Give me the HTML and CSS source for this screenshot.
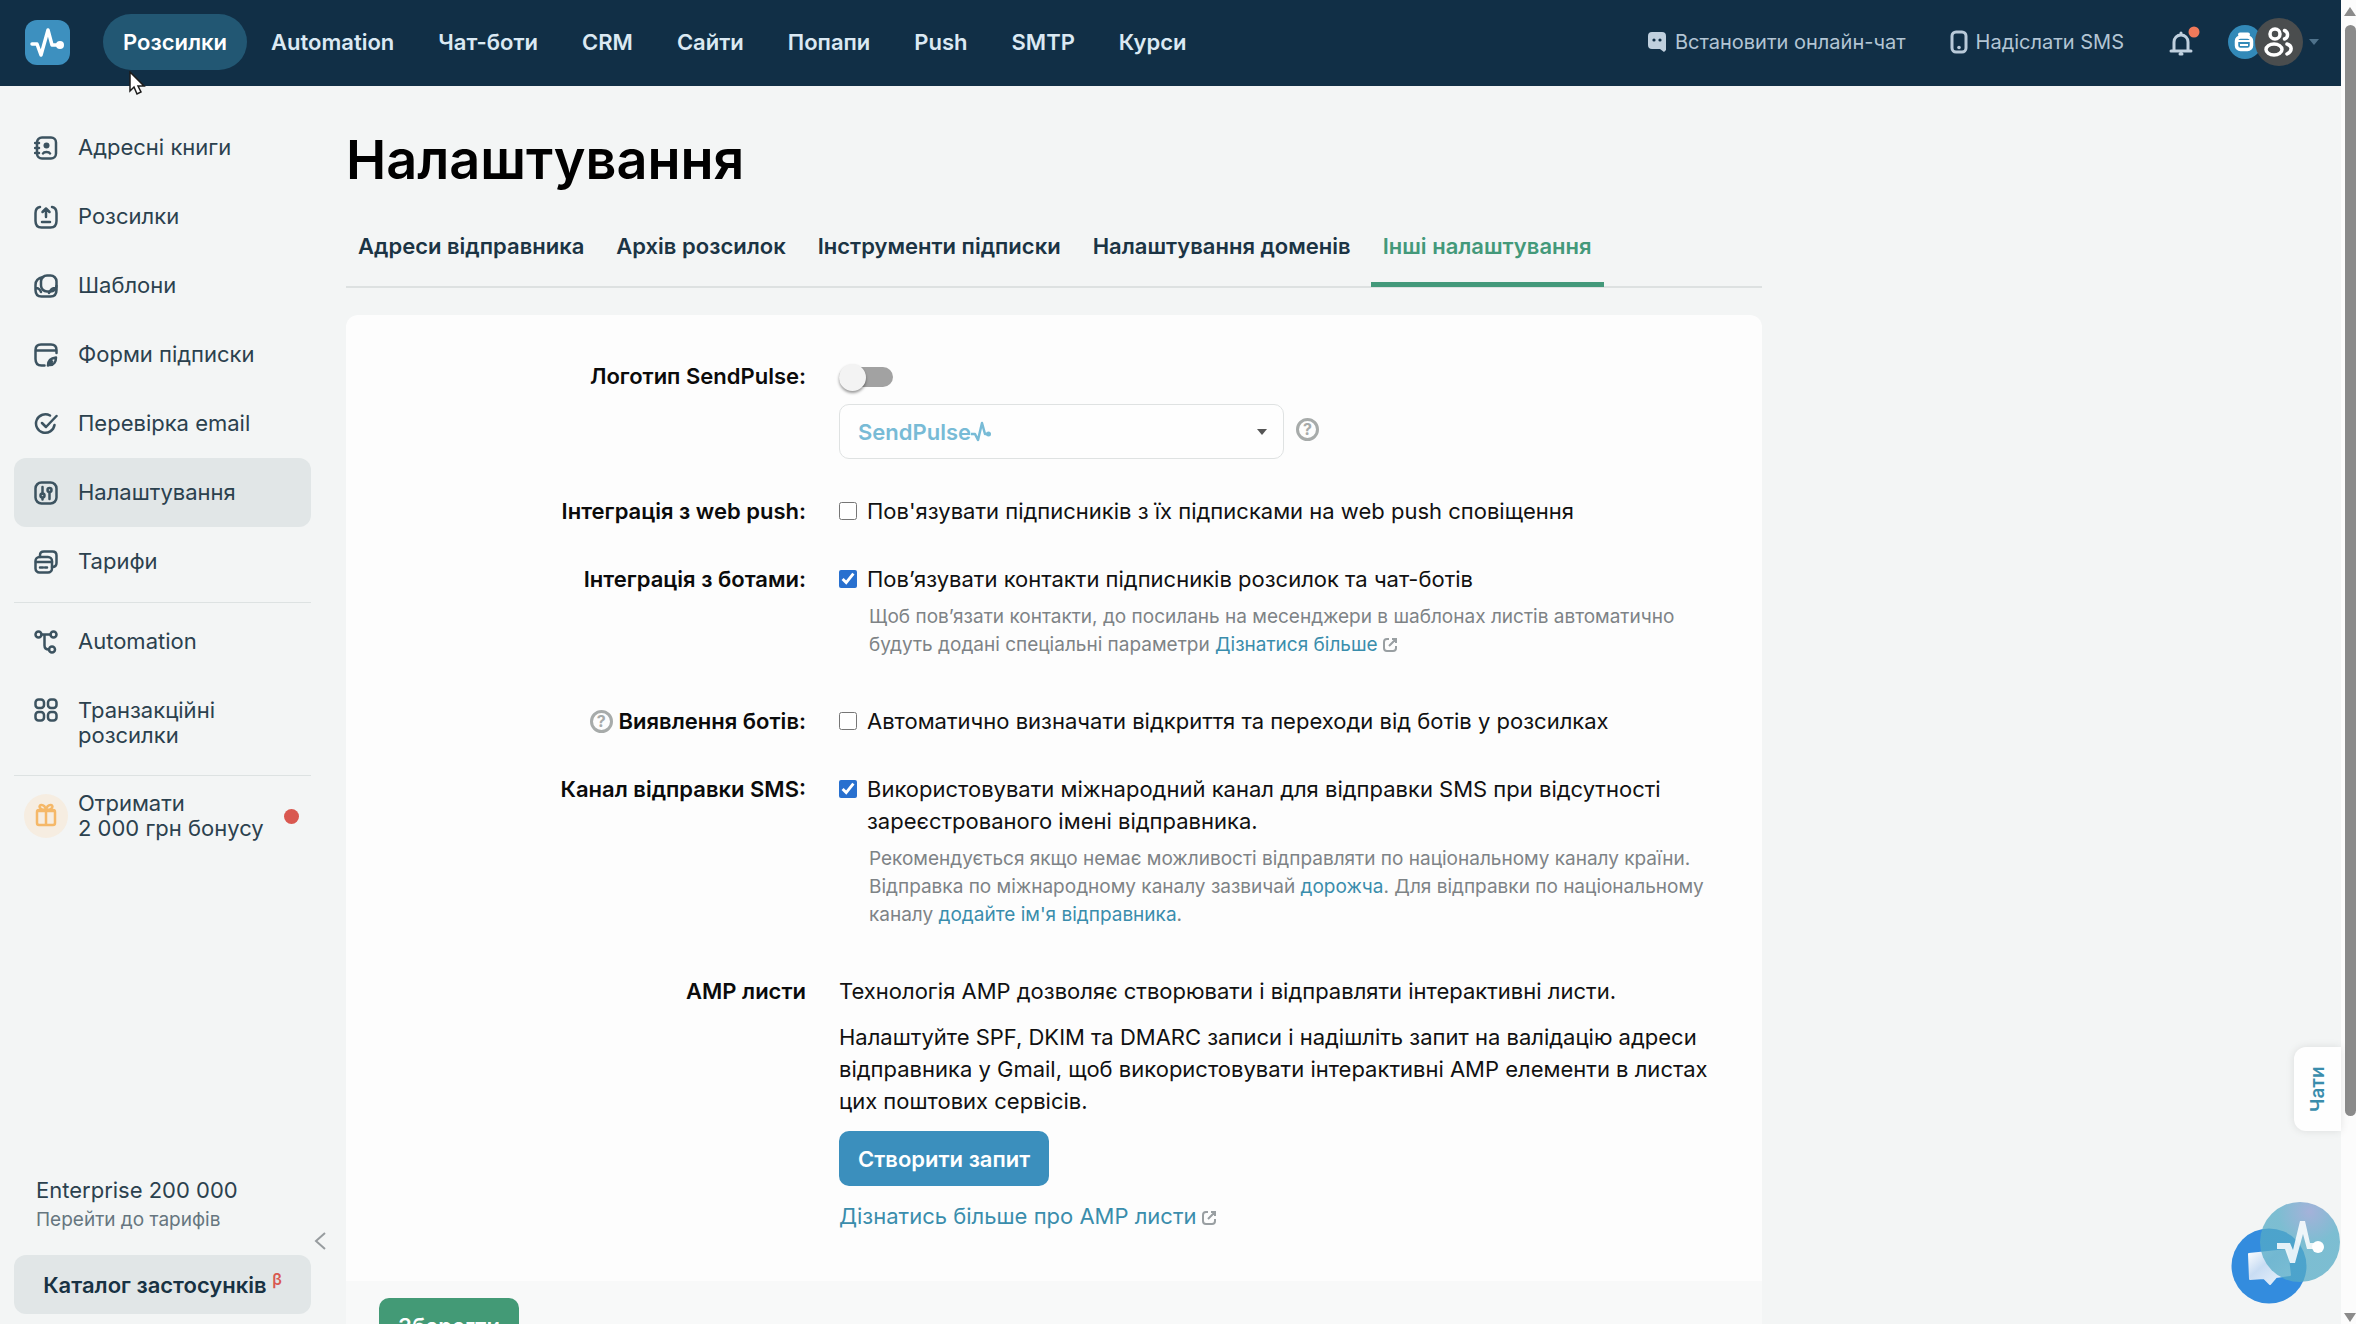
FILE: index.html
```html
<!DOCTYPE html>
<html lang="uk">
    <head>
        <meta charset="UTF-8" />
        <meta name="viewport" content="width=device-width, initial-scale=1" />
        <title>Налаштування</title>
        <link rel="stylesheet" href="styles.css">
    </head>

    <body>
        <div class="page">
            <header class="topbar">
                <a class="logo" href="#" aria-label="SendPulse">
                    <svg viewBox="0 0 45 45">
                        <path d="M7 24h5l4 11 7-25 4 15h8" fill="none" stroke="#fff" stroke-width="3.500" stroke-linejoin="round" stroke-linecap="round" />
                        <circle cx="35" cy="25" r="4" fill="#fff" />
                    </svg>
                </a>
                <nav class="main-nav">
                    <a class="active" href="#">Розсилки</a>
                    <a href="#">Automation</a>
                    <a href="#">Чат-боти</a>
                    <a href="#">CRM</a>
                    <a href="#">Сайти</a>
                    <a href="#">Попапи</a>
                    <a href="#">Push</a>
                    <a href="#">SMTP</a>
                    <a href="#">Курси</a>
                </nav>
                <div class="tools">
                    <a class="tool" href="#">
                        <svg width="20" height="22" viewBox="0 0 20 22">
                            <path d="M5 1h10a4 4 0 0 1 4 4v14l-2 2-4-3H5a4 4 0 0 1-4-4V5a4 4 0 0 1 4-4z" fill="#c0d0de" />
                            <circle cx="7" cy="9" r="1.6" fill="#112f46" />
                            <circle cx="13" cy="9" r="1.6" fill="#112f46" />
                        </svg>
                        Встановити онлайн-чат
                    </a>
                    <a class="tool" href="#">
                        <svg width="18" height="24" viewBox="0 0 18 24">
                            <rect x="2" y="2" width="14" height="20" rx="4" fill="none" stroke="#b9cad9" stroke-width="3" />
                            <circle cx="9" cy="17.500" r="1.800" fill="#b9cad9" />
                        </svg>
                        Надіслати SMS
                    </a>
                    <button class="bell" aria-label="Сповіщення">
                        <svg width="32" height="32" viewBox="0 0 32 32" fill="none" stroke="#c0d0de" stroke-width="3" stroke-linecap="round" stroke-linejoin="round">
                            <path d="M3 25h20M6 24v-8c0-4 3-7 7-7s7 3 7 7v8M13 8V7M12 28h2" />
                            <circle cx="26" cy="6" r="5.500" fill="#f0795a" stroke="none" />
                        </svg>
                    </button>
                    <button class="account" aria-label="Акаунт">
                        <svg class="bot" width="34" height="34" viewBox="0 0 34 34">
                            <circle cx="17" cy="17" r="17" fill="#3289b8" />
                            <path d="M12 9.500h8" stroke="#fff" stroke-width="4" stroke-linecap="round" />
                            <rect x="8.500" y="12" width="15" height="12.500" rx="4" fill="none" stroke="#fff" stroke-width="3.500" />
                            <path d="M10 16h12M12 20h8" stroke="#fff" stroke-width="2" />
                        </svg>
                        <svg class="team" width="48" height="48" viewBox="0 0 48 48">
                            <circle cx="24" cy="24" r="24" fill="#4a4d4e" />
                            <g fill="none" stroke="#fff" stroke-width="3.500" stroke-linecap="round">
                                <circle cx="20" cy="16" r="5" />
                                <ellipse cx="19" cy="31.500" rx="8" ry="5.500" />
                                <path d="M29.500 12.500a4.500 4.500 0 0 1 0 8.500M32 26c5 1.500 6 7 0 10" />
                            </g>
                        </svg>
                        <span class="caret"></span>
                    </button>
                </div>
            </header>

            <div class="layout">
                <aside class="sidebar">
                    <nav class="side-nav">
                        <a href="#">
                            <svg class="icon" viewBox="0 0 24 24">
                                <rect x="3" y="1.500" width="19" height="21" rx="5" />
                                <path d="M1 7h4M1 12h4M1 17h4M9 17.500c1-2 6-2 7 0" />
                                <circle class="solid" cx="12.500" cy="9.500" r="3" />
                            </svg>
                            <span>Адресні книги</span>
                        </a>
                        <a href="#">
                            <svg class="icon" viewBox="0 0 24 24">
                                <path d="M6 2C3 2.500 1.500 4 1.500 8v8c0 4.500 2 6.500 6 6.500h9c4 0 6-2 6-6.500V8c0-4-1.500-5.500-4.500-6M12 12V3.500M8.500 7L12 3.500 15.500 7M8 17h8" />
                            </svg>
                            <span>Розсилки</span>
                        </a>
                        <a href="#">
                            <svg class="icon" viewBox="0 0 24 24">
                                <rect x="7" y="1.500" width="15.500" height="16" rx="6" />
                                <path d="M9 3C4 4 1.500 6 1.500 11v5c0 4 2 6.500 6 6.500h9c4 0 6-2 6-6.500v-4M2 14c3 0 4 1.500 5 4M22 14c-4 0-5 1-7 5" />
                            </svg>
                            <span>Шаблони</span>
                        </a>
                        <a href="#">
                            <svg class="icon" viewBox="0 0 24 24">
                                <path d="M22.500 10V7c0-4-2-5.500-5.500-5.500H7C3.500 1.500 1.500 3 1.500 7v9c0 4.500 2 6.500 6 6.500h3M1.500 7.500h21" />
                                <path d="M14 22.500c0-5 3-7.500 8-8 0 4-2 7.500-6 7.500M14 22.500l4-4" />
                            </svg>
                            <span>Форми підписки</span>
                        </a>
                        <a href="#">
                            <svg class="icon" viewBox="0 0 24 24">
                                <path d="M16 3.500A9.300 9.300 0 1 0 20.500 13M8 11l4 4L22.500 4" />
                            </svg>
                            <span>Перевірка email</span>
                        </a>
                        <a class="active" href="#">
                            <svg class="icon" viewBox="0 0 24 24">
                                <rect x="1.500" y="1.500" width="21" height="21" rx="6" />
                                <path d="M8.500 6v7M8.500 17v1.500M15.500 12v6" />
                                <circle cx="8.500" cy="14.500" r="2" />
                                <circle cx="15.500" cy="9" r="2" />
                            </svg>
                            <span>Налаштування</span>
                        </a>
                        <a href="#">
                            <svg class="icon" viewBox="0 0 24 24">
                                <rect x="1.500" y="7" width="16.500" height="15.500" rx="4" />
                                <path d="M6 7V5c0-2.500 1.500-3.500 4-3.500h8.500c3 0 4 1.500 4 4V13c0 3-1.500 4-4.500 4M2 12h16M6 17.500h3M11 17.500h2" />
                            </svg>
                            <span>Тарифи</span>
                        </a>
                        <hr />
                        <a href="#">
                            <svg class="icon" viewBox="0 0 24 24">
                                <circle cx="4.500" cy="4.500" r="3" />
                                <circle cx="19.500" cy="4.500" r="3" />
                                <circle cx="18" cy="19.500" r="3" />
                                <path d="M7.500 4.500h9M10.500 4.500v11c0 3 1.500 4 4.500 4" />
                            </svg>
                            <span>Automation</span>
                        </a>
                        <a class="tall" href="#">
                            <svg class="icon" viewBox="0 0 24 24">
                                <rect x="1.500" y="1.500" width="8.500" height="8.500" rx="3" />
                                <rect x="14" y="1.500" width="8.500" height="8.500" rx="3" />
                                <rect x="1.500" y="14" width="8.500" height="8.500" rx="3" />
                                <rect x="14" y="14" width="8.500" height="8.500" rx="3" />
                            </svg>
                            <span>Транзакційні<br />розсилки</span>
                        </a>
                        <hr />
                        <a class="bonus" href="#">
                            <svg class="gift" width="44" height="44" viewBox="0 0 44 44">
                                <circle cx="22" cy="22" r="22" fill="#f6ede1" />
                                <g fill="none" stroke="#f5b868" stroke-width="2.500">
                                    <rect x="13" y="16" width="18" height="15" rx="2" />
                                    <path d="M22 16v15M13 17h18M22 16c-7 0-8-5-4.500-5S22 16 22 16s1-5 4.500-5S29 16 22 16" />
                                </g>
                            </svg>
                            <span>Отримати<br />2 000 грн бонусу</span>
                            <i class="dot"></i>
                        </a>
                    </nav>
                    <div class="side-bottom">
                        <div class="plan">
                            <div>
                                <p>Enterprise 200 000</p>
                                <a href="#">Перейти до тарифів</a>
                            </div>
                            <button class="collapse" aria-label="Згорнути">
                                <svg width="12" height="18" viewBox="0 0 12 18">
                                    <path d="M11 1L2 9l9 8" fill="none" stroke="#979c9f" stroke-width="2" />
                                </svg>
                            </button>
                        </div>
                        <button class="catalog">Каталог застосунків <sup>β</sup></button>
                    </div>
                </aside>

                <main class="content">
                    <h1>Налаштування</h1>
                    <nav class="tabs">
                        <a href="#">Адреси відправника</a>
                        <a href="#">Архів розсилок</a>
                        <a href="#">Інструменти підписки</a>
                        <a href="#">Налаштування доменів</a>
                        <a class="active" href="#">Інші налаштування</a>
                    </nav>

                    <form class="card">
                        <div class="fields">
                            <div class="row">
                                <label class="title" for="logo-toggle">Логотип SendPulse:</label>
                                <div class="field">
                                    <input class="toggle" type="checkbox" id="logo-toggle" />
                                    <div class="select-line">
                                        <div class="select-box">
                                            <select id="logo-select" aria-label="Логотип">
                                                <option>SendPulse</option>
                                            </select>
                                            <svg class="pulse" width="22" height="22" viewBox="0 0 22 22">
                                                <path d="M1 13h4l3 6 4-17 3 11h3" fill="none" stroke="#78bbd6" stroke-width="2.500" stroke-linejoin="round" />
                                                <circle cx="18.500" cy="13" r="2.500" fill="#78bbd6" />
                                            </svg>
                                        </div>
                                        <span class="help">?</span>
                                    </div>
                                </div>
                            </div>

                            <div class="row">
                                <span class="title">Інтеграція з web push:</span>
                                <div class="field">
                                    <label class="check">
                                        <input type="checkbox" />
                                        <span>Пов'язувати підписників з їх підписками на web push сповіщення</span>
                                    </label>
                                </div>
                            </div>

                            <div class="row wide-gap">
                                <span class="title">Інтеграція з ботами:</span>
                                <div class="field">
                                    <label class="check">
                                        <input type="checkbox" checked />
                                        <span>Пов’язувати контакти підписників розсилок та чат-ботів</span>
                                    </label>
                                    <p class="hint">
                                        Щоб пов’язати контакти, до посилань на месенджери в шаблонах листів автоматично<br />
                                        будуть додані спеціальні параметри
                                        <a href="#">Дізнатися більше</a><svg class="external" viewBox="0 0 16 16"><path d="M7 2H5C3 2 2 3 2 5v6c0 2 1 3 3 3h6c2 0 3-1 3-3V9M10 2h4v4M14 2L7 9" /></svg>
                                    </p>
                                </div>
                            </div>

                            <div class="row">
                                <span class="title"><span class="help">?</span> Виявлення ботів:</span>
                                <div class="field">
                                    <label class="check">
                                        <input type="checkbox" />
                                        <span>Автоматично визначати відкриття та переходи від ботів у розсилках</span>
                                    </label>
                                </div>
                            </div>

                            <div class="row wide-gap">
                                <span class="title">Канал відправки SMS:</span>
                                <div class="field">
                                    <label class="check">
                                        <input type="checkbox" checked />
                                        <span>Використовувати міжнародний канал для відправки SMS при відсутності<br />зареєстрованого імені відправника.</span>
                                    </label>
                                    <p class="hint">
                                        Рекомендується якщо немає можливості відправляти по національному каналу країни.<br />
                                        Відправка по міжнародному каналу зазвичай <a href="#">дорожча</a>. Для відправки по національному<br />
                                        каналу <a href="#">додайте ім'я відправника</a>.
                                    </p>
                                </div>
                            </div>

                            <div class="row">
                                <span class="title">АМР листи</span>
                                <div class="field amp">
                                    <p>Технологія AMP дозволяє створювати і відправляти інтерактивні листи.</p>
                                    <p>
                                        Налаштуйте SPF, DKIM та DMARC записи і надішліть запит на валідацію адреси<br />
                                        відправника у Gmail, щоб використовувати інтерактивні AMP елементи в листах<br />
                                        цих поштових сервісів.
                                    </p>
                                    <button class="btn blue" type="button">Створити запит</button>
                                    <p>
                                        <a href="#">Дізнатись більше про AMP листи</a><svg class="external" viewBox="0 0 16 16"><path d="M7 2H5C3 2 2 3 2 5v6c0 2 1 3 3 3h6c2 0 3-1 3-3V9M10 2h4v4M14 2L7 9" /></svg>
                                    </p>
                                </div>
                            </div>
                        </div>
                        <div class="card-footer">
                            <button class="btn green" type="submit">Зберегти</button>
                        </div>
                    </form>
                </main>
            </div>
        </div>

        <div class="scrollbar">
            <i class="arrow up"></i>
            <i class="thumb"></i>
            <i class="arrow down"></i>
        </div>

        <button class="chats">Чати</button>

        <svg class="bubbles" width="110" height="124" viewBox="0 0 110 124">
            <defs>
                <radialGradient id="mix" cx="0.62" cy="0.12" r="0.4">
                    <stop offset="0" stop-color="#8a9bd0" />
                    <stop offset="1" stop-color="#55abc6" />
                </radialGradient>
                <linearGradient id="paper" x1="0" y1="0" x2="1" y2="1">
                    <stop offset="0" stop-color="#fff" />
                    <stop offset="0.4" stop-color="#c8dcf3" />
                    <stop offset="1" stop-color="#eef5fc" />
                </linearGradient>
            </defs>
            <circle cx="38" cy="80" r="37.500" fill="#338cde" />
            <path d="M18 68l38-4 3 25-14 2-6 7-6-6-14 1z" fill="url(#paper)" stroke="url(#paper)" stroke-width="2" stroke-linejoin="round" />
            <circle cx="69" cy="56" r="40" fill="url(#mix)" opacity="0.750" />
            <path d="M46 57h13l3 7 7-29h5l5 22h8v6H76l-4-15-8 29h-5l-5-14h-8z" fill="#fff" fill-opacity="0.850" />
            <circle cx="87" cy="61" r="6" fill="#fff" />
        </svg>

        <svg class="cursor" width="18" height="26" viewBox="0 0 18 26">
            <path d="M1 1v19l4-4 3 7 4-2-3-6h6z" fill="#fff" stroke="#1c1c1c" stroke-width="1.500" />
        </svg>
    </body>
</html>
```
FILE: styles.css
```css
* {
    box-sizing: border-box;
}
body {
    margin: 0;
    height: 100vh;
    overflow: hidden;
    display: flex;
    background-color: #f3f5f5;
    color: #111;
    font-family: Inter, "Noto Sans", sans-serif;
    font-size: 22px;
    line-height: 32px;
}
a {
    color: #3a8dac;
    text-decoration: none;
}
p {
    margin: 0;
}
button {
    font: inherit;
    border: 0;
    padding: 0;
    background: none;
}
svg {
    display: block;
    flex: none;
}
.page {
    flex: 1;
    min-width: 0;
    display: flex;
    flex-direction: column;
}

/* top bar */
.topbar {
    height: 86px;
    flex: none;
    display: flex;
    align-items: center;
    padding: 0 22px 2px 25px;
    background-color: #112f46;
}
.logo {
    width: 45px;
    height: 45px;
    border-radius: 12px;
    background-color: #3d90bf;
}
.main-nav {
    display: flex;
    gap: 4px;
    margin-left: 33px;
}
.main-nav a {
    padding: 12px 20px;
    border-radius: 28px;
    color: #dbe9f3;
    font-weight: 600;
}
.main-nav a.active {
    background-color: #225773;
    color: #fff;
}
.tools {
    display: flex;
    align-items: center;
    margin-left: auto;
}
.tool {
    display: flex;
    align-items: center;
    gap: 8px;
    margin-right: 44px;
    color: #b3c5d4;
    font-size: 20px;
}
.account {
    display: flex;
    align-items: center;
    margin-left: 28px;
}
.team {
    margin-left: -7px;
}
.caret {
    margin-left: 6px;
    border: 5px solid transparent;
    border-top: 6px solid #4f728b;
    border-bottom: 0;
}

/* sidebar */
.layout {
    flex: 1;
    min-height: 0;
    display: flex;
}
.sidebar {
    width: 346px;
    flex: none;
    display: flex;
    flex-direction: column;
    padding: 27px 20px 10px 14px;
}
.side-nav {
    width: 297px;
}
.side-nav a {
    display: flex;
    align-items: center;
    gap: 20px;
    min-height: 69px;
    padding: 0 20px;
    border-radius: 12px;
    color: #2b414e;
    line-height: 25px;
}
.side-nav a.active {
    background-color: #e1e6e7;
}
.side-nav a.tall {
    align-items: flex-start;
    padding-top: 22px;
    min-height: 93px;
}
.side-nav a.bonus {
    gap: 10px;
    padding: 0 12px 0 10px;
    min-height: 72px;
}
.side-nav hr {
    margin: 6px 0 4px;
    border: 0;
    border-top: 1px solid #dde2e2;
}
.icon {
    width: 24px;
    height: 24px;
    fill: none;
    stroke: #3c5360;
    stroke-width: 2.5;
    stroke-linecap: round;
    stroke-linejoin: round;
}
.icon .solid {
    fill: #3c5360;
    stroke: none;
}
.dot {
    width: 15px;
    height: 15px;
    margin-left: auto;
    border-radius: 50%;
    background-color: #d95850;
}
.side-bottom {
    margin-top: auto;
}
.plan {
    display: flex;
    justify-content: space-between;
    align-items: flex-end;
    padding: 0 0 5px 22px;
    color: #2b414e;
}
.plan a {
    display: block;
    margin-bottom: 16px;
    color: #66767f;
    font-size: 19px;
    line-height: 28px;
}
.catalog {
    width: 297px;
    height: 59px;
    border-radius: 12px;
    background-color: #e1e6e7;
    color: #183243;
    font-weight: 600;
}
.catalog sup {
    color: #d95850;
    font-size: 16px;
    line-height: 0;
}

/* content */
.content {
    flex: 1;
    min-width: 0;
    max-width: 1416px;
}
h1 {
    margin: 0;
    padding-top: 42px;
    font-size: 54px;
    font-weight: 600;
    line-height: 64px;
    color: #000;
}
.tabs {
    display: flex;
    gap: 8px;
    margin-top: 19px;
    border-bottom: 2px solid #dde1e1;
}
.tabs a {
    padding: 19px 12px 20px;
    margin-bottom: -1px;
    border-bottom: 5px solid transparent;
    color: #1b3444;
    font-weight: 600;
}
.tabs a.active {
    color: #43997a;
    border-bottom-color: #43997a;
}
.card {
    margin-top: 27px;
    border-radius: 12px;
    background-color: #fdfdfd;
}
.fields {
    display: flex;
    flex-direction: column;
    gap: 36px;
    padding: 45px 40px 35px 0;
}
.row {
    display: grid;
    grid-template-columns: 460px 1fr;
    gap: 33px;
}
.row.wide-gap {
    margin-bottom: 10px;
}
.title {
    display: flex;
    justify-content: flex-end;
    align-items: center;
    align-self: start;
    gap: 6px;
    color: #0b0b0b;
    font-weight: 600;
}
.help {
    display: flex;
    align-items: center;
    justify-content: center;
    width: 23px;
    height: 23px;
    border: 3px solid #a7abaa;
    border-radius: 50%;
    color: #a7abaa;
    font-size: 16px;
    font-weight: 700;
    line-height: 18px;
}
.toggle {
    appearance: none;
    display: flex;
    align-items: center;
    width: 54px;
    height: 20px;
    margin: 7px 0 17px;
    border-radius: 10px;
    background-color: #a2a2a2;
}
.toggle::before {
    content: "";
    width: 27px;
    height: 27px;
    flex: none;
    border-radius: 50%;
    background-color: #f3f3f3;
    box-shadow: 0 2px 3px rgba(0, 0, 0, 0.4);
}
.select-line {
    display: flex;
    gap: 12px;
    align-items: center;
}
.select-line .help {
    margin-bottom: 5px;
}
.select-box {
    position: relative;
}
.select-box select {
    appearance: none;
    display: block;
    width: 445px;
    height: 55px;
    padding: 0 18px;
    border: 1px solid #dfe2e2;
    border-radius: 10px;
    background-color: #fefefe;
    color: #78bbd6;
    font-family: inherit;
    font-size: 22px;
    font-weight: 600;
}
.select-box::after {
    content: "";
    position: absolute;
    right: 17px;
    top: 25px;
    border: 5px solid transparent;
    border-top: 6px solid #555;
    border-bottom: 0;
}
.pulse {
    position: absolute;
    left: 131px;
    top: 17px;
}
.check {
    display: flex;
    align-items: flex-start;
    gap: 10px;
}
.check input {
    width: 18px;
    height: 18px;
    margin: 7px 0;
    flex: none;
    accent-color: #2870cf;
}
.hint {
    padding: 8px 0 0 30px;
    color: #7e8386;
    font-size: 19px;
    line-height: 28px;
}
.external {
    display: inline-block;
    width: 16px;
    height: 16px;
    margin-left: 4px;
    fill: none;
    stroke: #999fa2;
    stroke-width: 2;
    vertical-align: -2px;
}
.amp p {
    margin-bottom: 14px;
}
.btn {
    padding: 0 19px;
    height: 55px;
    border-radius: 10px;
    color: #fff;
    font-weight: 600;
}
.btn.blue {
    margin-bottom: 14px;
    background-color: #3b8fbd;
}
.btn.green {
    background-color: #439a76;
}
.card-footer {
    padding: 17px 33px 30px;
    background-color: #f8f9f9;
}

/* window scrollbar */
.scrollbar {
    width: 15px;
    flex: none;
    display: flex;
    flex-direction: column;
    align-items: flex-end;
    padding: 7px 0 2px;
    background-color: #fcfcfc;
}
.thumb {
    width: 11px;
    flex: 0 1 1091px;
    margin-top: 9px;
    border-radius: 6px;
    background-color: #8b8b8b;
}
.arrow {
    border: 6px solid transparent;
}
.arrow.up {
    border-top: 0;
    border-bottom: 9px solid #8b8b8b;
}
.arrow.down {
    margin-top: auto;
    border-bottom: 0;
    border-top: 9px solid #8b8b8b;
}

/* floating things */
.chats {
    position: absolute;
    right: 15px;
    bottom: 193px;
    width: 47px;
    height: 84px;
    border-radius: 0 12px 12px 0;
    background-color: #fefefe;
    box-shadow: 0 0 8px rgba(0, 0, 0, 0.1);
    color: #3a8dac;
    font-size: 19px;
    font-weight: 600;
    writing-mode: vertical-rl;
    transform: rotate(180deg);
}
.bubbles {
    position: absolute;
    right: 15px;
    bottom: 14px;
}
.cursor {
    position: absolute;
    left: 129px;
    top: 71px;
}
```
